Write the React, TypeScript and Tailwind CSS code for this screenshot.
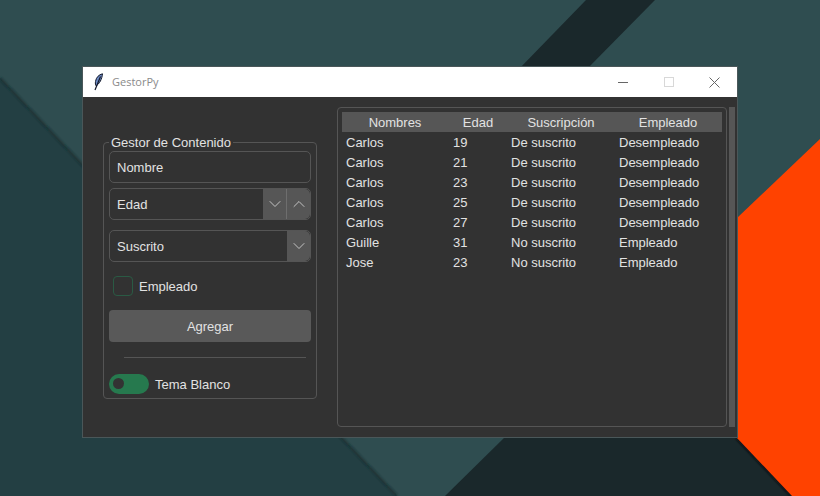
import { ChevronDown, ChevronUp } from "lucide-react";

const rows = [
  ["Carlos", "19", "De suscrito", "Desempleado"],
  ["Carlos", "21", "De suscrito", "Desempleado"],
  ["Carlos", "23", "De suscrito", "Desempleado"],
  ["Carlos", "25", "De suscrito", "Desempleado"],
  ["Carlos", "27", "De suscrito", "Desempleado"],
  ["Guille", "31", "No suscrito", "Empleado"],
  ["Jose", "23", "No suscrito", "Empleado"],
];

function Wallpaper() {
  return (
    <svg className="absolute inset-0" width="820" height="496" viewBox="0 0 820 496">
      <defs>
        <filter id="soft" x="-20%" y="-20%" width="140%" height="140%">
          <feGaussianBlur stdDeviation="1.2" />
        </filter>
      </defs>
      <rect width="820" height="496" fill="#2f4d50" />
      <polygon points="0,78 397,496 0,496" fill="#233f43" />
      <path d="M0 78 L397 496" stroke="#1b3033" strokeWidth="2" filter="url(#soft)" />
      <polygon points="586,0 655,0 586,70 518,70" fill="#1a282b" />
      <polygon points="506,436 820,436 820,496 445,496" fill="#1a282b" />
      <path d="M737 438 L792 496" stroke="#0c1214" strokeWidth="3" filter="url(#soft)" />
      <polygon points="737,218 820,139 820,496 792,496 737,438" fill="#ff4200" />
    </svg>
  );
}

function Feather() {
  return (
    <svg width="11" height="18" viewBox="0 0 11 18">
      <path d="M9.5 0.8 C6 1.5 3 4.5 2.5 8.5 C2.2 10.5 2.5 12 3 12.8 C6.5 11 9 6 9.5 0.8 Z" fill="#6d8ac4" stroke="#141a2c" strokeWidth="1" />
      <path d="M7.5 3.5 L2 17" stroke="#141a2c" strokeWidth="1.2" />
    </svg>
  );
}

function StepButton({ up, round }: { up?: boolean; round?: boolean }) {
  const Icon = up ? ChevronUp : ChevronDown;
  return (
    <div className={`w-[23px] flex items-center justify-center bg-[#565656] ${round ? "rounded-r-[5px]" : ""}`}>
      <Icon size={20} strokeWidth={1} className="text-[#d8d8d8] shrink-0" />
    </div>
  );
}

function Field({ label, children }: { label: string; children?: React.ReactNode }) {
  return (
    <div className="h-[32px] flex rounded-[5px] border border-[#555555] overflow-hidden shrink-0">
      <div className="flex-1 pl-[7px] pt-[2px] flex items-center">{label}</div>
      {children}
    </div>
  );
}

export default function App() {
  return (
    <div className="relative w-[820px] h-[496px] overflow-hidden flex items-start font-['Liberation_Sans',Arial,sans-serif] text-[13px] text-[#e2e2e2]">
      <Wallpaper />
      <div className="relative ml-[83px] mt-[67px] w-[654px] h-[370px] flex flex-col bg-[#323232] shadow-[0_0_0_1px_#4a5759]">
        {/* Title bar */}
        <div className="h-[30px] bg-white flex items-center pl-[10px] shrink-0">
          <Feather />
          <span className="ml-[8px] text-[11px] text-[#8a8a8a] font-['Open_Sans',sans-serif]">GestorPy</span>
          <div className="ml-auto flex items-center">
            <div className="w-[45px] flex justify-center pr-[3px]">
              <div className="w-[10px] h-px bg-[#666666]" />
            </div>
            <div className="w-[45px] flex justify-center pr-[1px]">
              <div className="w-[10px] h-[10px] border border-[#d8d8d8]" />
            </div>
            <div className="w-[45px] flex justify-center">
              <svg width="11" height="11" viewBox="0 0 11 11">
                <path d="M0.5 0.5 L10.5 10.5 M10.5 0.5 L0.5 10.5" stroke="#666666" strokeWidth="1" />
              </svg>
            </div>
          </div>
        </div>

        <div className="flex-1 flex">
          {/* Left panel */}
          <div className="w-[254px] shrink-0 pl-[20px] pr-[20px] pt-[45px]">
            <div className="relative h-[257px] rounded-[4px] border border-[#555555] px-[5px] pt-[8px] flex flex-col">
              <span className="absolute -top-[9px] left-[5px] bg-[#323232] px-[2px] pt-[1px] leading-[16px]">Gestor de Contenido</span>
              <Field label="Nombre" />
              <div className="h-[5px] shrink-0" />
              <Field label="Edad">
                <StepButton />
                <div className="w-px bg-[#6e6e6e]" />
                <StepButton up round />
              </Field>
              <div className="h-[10px] shrink-0" />
              <Field label="Suscrito">
                <StepButton round />
              </Field>
              <div className="mt-[8px] h-[32px] flex items-center pl-[4px] gap-[6px] shrink-0">
                <div className="w-[20px] h-[20px] rounded-[4px] border border-[#2a5a44]" />
                <span className="pt-[2px]">Empleado</span>
              </div>
              <div className="mt-[8px] h-[32px] pt-[2px] rounded-[4px] bg-[#595959] flex items-center justify-center shrink-0">Agregar</div>
              <div className="mt-[15px] ml-[15px] mr-[5px] h-px bg-[#555555] shrink-0" />
              <div className="mt-[15px] flex items-center gap-[6px]">
                <div className="w-[40px] h-[20px] rounded-full bg-[#26794e] flex items-center pl-[4px]">
                  <div className="w-[11px] h-[11px] rounded-full bg-[#333333]" />
                </div>
                <span className="pt-[2px]">Tema Blanco</span>
              </div>
            </div>
          </div>

          {/* Table */}
          <div className="w-[390px] mt-[10px] mb-[10px] rounded-[4px] border border-[#555555] p-[4px]">
            <div className="h-[20px] pt-[2px] bg-[#565656] flex items-center">
              <div className="w-[106px] text-center">Nombres</div>
              <div className="w-[60px] text-center">Edad</div>
              <div className="w-[106px] text-center">Suscripción</div>
              <div className="flex-1 text-center">Empleado</div>
            </div>
            {rows.map((r, i) => (
              <div key={i} className="h-[20px] pt-[2px] flex items-center">
                <div className="w-[107px] pl-[4px]">{r[0]}</div>
                <div className="w-[58px] pl-[4px]">{r[1]}</div>
                <div className="w-[108px] pl-[4px]">{r[2]}</div>
                <div className="pl-[4px]">{r[3]}</div>
              </div>
            ))}
          </div>
          <div className="ml-[2px] w-[6px] mt-[10px] mb-[10px] bg-[#565656]" />
        </div>
      </div>
    </div>
  );
}
